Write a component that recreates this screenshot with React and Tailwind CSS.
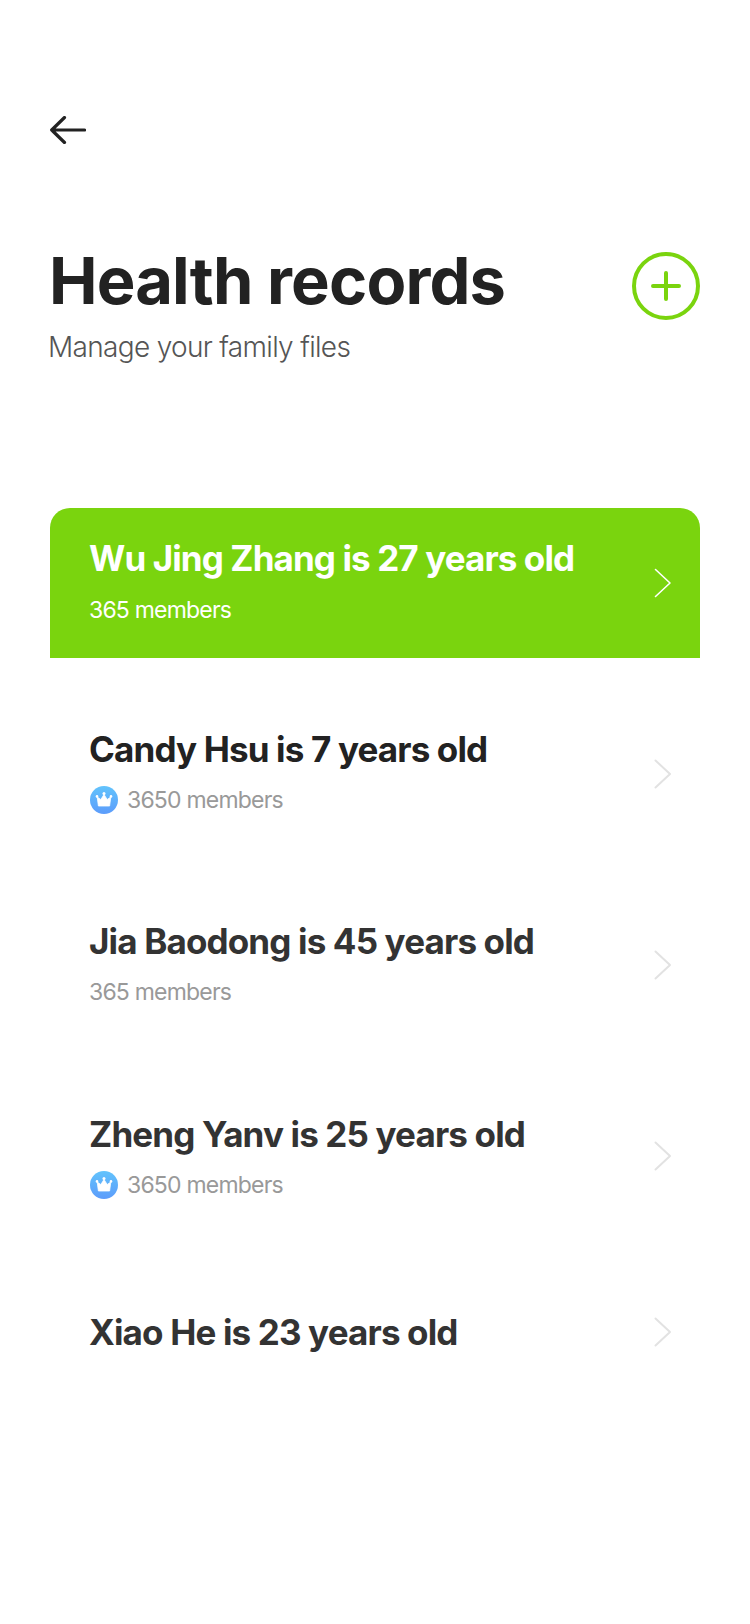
import React from "react";

const RECORDS = [
  { name: "Candy Hsu is 7 years old", members: "3650 members", vip: true, tone: "text-[#222222]", offset: "-mt-[6px]" },
  { name: "Jia Baodong is 45 years old", members: "365 members", vip: false, tone: "text-[#333333]", offset: "-mt-[3px]" },
  { name: "Zheng Yanv is 25 years old", members: "3650 members", vip: true, tone: "text-[#333333]", offset: "mt-0" },
  { name: "Xiao He is 23 years old", members: null, vip: false, tone: "text-[#333333]", offset: "mt-0" },
];

const Chevron = ({ color, width = 2 }) => (
  <svg width="18" height="30" viewBox="0 0 18 30" fill="none" className="shrink-0">
    <path d="M1.5 1.5 16 15 1.5 28.5" stroke={color} strokeWidth={width} strokeLinecap="round" strokeLinejoin="round" />
  </svg>
);

const Crown = () => (
  <svg width="28" height="28" viewBox="0 0 28 28" className="ml-px shrink-0">
    <defs>
      <linearGradient id="crownBg" x1="0" y1="0" x2="0" y2="1">
        <stop offset="0" stopColor="#62c3fc" />
        <stop offset="1" stopColor="#5c9cfb" />
      </linearGradient>
    </defs>
    <circle cx="14" cy="14" r="14" fill="url(#crownBg)" />
    <path d="M14 8.5 17.2 13.5 20.8 11 19.6 20H8.4L7.2 11 10.8 13.5Z" fill="#fff" stroke="#fff" strokeWidth="0.8" strokeLinejoin="round" />
    <circle cx="14" cy="7.6" r="1.5" fill="#fff" />
    <circle cx="7" cy="10.4" r="1.3" fill="#fff" />
    <circle cx="21" cy="10.4" r="1.3" fill="#fff" />
  </svg>
);

export default function App() {
  return (
    <div className="w-[750px] min-h-[1624px] bg-white font-['Inter',sans-serif]">
      <div className="px-[50px] pt-[116px]">
        <svg width="36" height="28" viewBox="0 0 36 28" fill="none">
          <path d="M34.5 14H1.7M14.5 1.5 1.7 14 14.5 26.5" stroke="#222222" strokeWidth="3.2" strokeLinecap="round" strokeLinejoin="round" />
        </svg>
      </div>

      <div className="mt-[98px] flex items-start justify-between pl-[49px] pr-[50px]">
        <div>
          <h1 className="text-[65px] leading-[78px] font-bold tracking-[-0.85px] text-[#222222]">Health records</h1>
          <p className="mt-[10px] -ml-px text-[28px] leading-[34px] font-light tracking-[-0.68px] text-[#555555]">Manage your family files</p>
        </div>
        <button className="mt-[10px] flex h-[68px] w-[68px] items-center justify-center rounded-full border-[4px] border-[#7ad40e]">
          <svg width="30" height="30" viewBox="0 0 30 30" fill="none">
            <path d="M15 2v26M2 15h26" stroke="#7ad40e" strokeWidth="4" strokeLinecap="round" />
          </svg>
        </button>
      </div>

      <div className="mx-[50px] mt-[144px] flex h-[150px] items-center justify-between rounded-t-[20px] bg-[#7ad40e] pl-[39px] pr-[28px]">
        <div className="-mt-[6px]">
          <div className="text-[35px] leading-[44px] font-bold tracking-[-0.9px] text-white">Wu Jing Zhang is 27 years old</div>
          <div className="mt-[15px] text-[23px] leading-[30px] tracking-[-0.8px] text-white">365 members</div>
        </div>
        <Chevron color="#ffffff" width={1.6} />
      </div>

      <div className="mx-[50px] pt-[20px]">
        {RECORDS.map((r) => (
          <div key={r.name} className={`flex items-center justify-between pl-[39px] pr-[28px] ${r.members ? "h-[191px]" : "h-[162px]"}`}>
            <div className={r.offset}>
              <div className={`text-[35px] leading-[44px] font-bold tracking-[-0.85px] ${r.tone}`}>{r.name}</div>
              {r.members && (
                <div className="mt-[14px] flex items-center gap-[9px]">
                  {r.vip && <Crown />}
                  <span className="text-[23px] leading-[30px] tracking-[-0.8px] text-[#999999]">{r.members}</span>
                </div>
              )}
            </div>
            <Chevron color="#e2e2e2" />
          </div>
        ))}
      </div>
    </div>
  );
}
